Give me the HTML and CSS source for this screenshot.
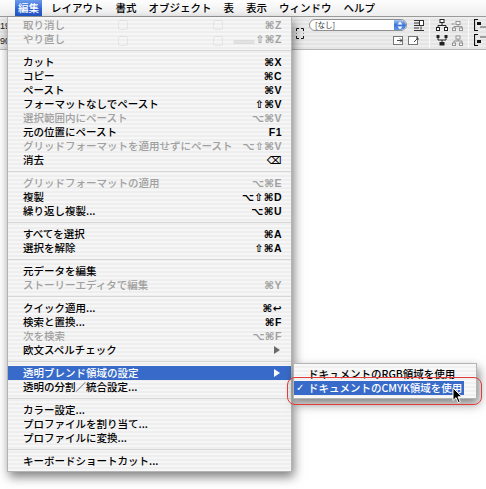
FILE: index.html
```html
<!DOCTYPE html>
<html lang="ja">
<head>
<meta charset="utf-8">
<title>編集メニュー</title>
<link rel="stylesheet" href="styles.css">
</head>
<body>
<div class="menubar">
  <span class="mb-item active">編集</span>
  <span class="mb-item">レイアウト</span>
  <span class="mb-item">書式</span>
  <span class="mb-item">オブジェクト</span>
  <span class="mb-item">表</span>
  <span class="mb-item">表示</span>
  <span class="mb-item">ウィンドウ</span>
  <span class="mb-item">ヘルプ</span>
</div>

<div class="toolbar">
  <div class="tb-stub"><span>19</span><span>90</span></div>
  <div class="tb-right">
    <div class="tb-frame">
      <svg width="8" height="11" viewBox="0 0 8 11"><path d="M0.5 3V0.5H3M5 0.5H7.5V3M7.5 8V10.5H5M3 10.5H0.5V8" fill="none" stroke="#111" stroke-width="1"/><path d="M0.5 5v1M7.5 5v1" stroke="#888" stroke-width="1"/></svg>
    </div>
    <div class="tb-main">
      <div class="tb-row">
        <div class="dropdown"><span class="dd-text">[なし]</span><span class="dd-btn"><svg width="6" height="9" viewBox="0 0 6 9"><path d="M3 0.5L5.5 3.5H0.5Z M3 8.5L5.5 5.5H0.5Z" fill="#fff"/></svg></span></div>
        <span class="icon"><svg width="12" height="12" viewBox="0 0 12 12"><path d="M1 1.5h5M1 4h5M1 6.5h5M1 9h5M1 11.5h10" stroke="#333" stroke-width="1"/><rect x="6.5" y="1.5" width="4" height="5" fill="#fff" stroke="#333"/><path d="M8 7.5v3" stroke="#333"/></svg></span>
      </div>
      <div class="tb-row row2">
        <span class="icon"><svg width="12" height="12" viewBox="0 0 12 12"><rect x="0.5" y="2.5" width="9" height="8" fill="#fff" stroke="#777"/><path d="M4 6.5h5M7 4.5l2 2-2 2" fill="none" stroke="#444"/></svg></span>
        <span class="icon"><svg width="12" height="12" viewBox="0 0 12 12"><rect x="0.5" y="2.5" width="9" height="8" fill="#fff" stroke="#777"/><path d="M6 8l4-4M8 4h2v2" fill="none" stroke="#444"/></svg></span>
      </div>
    </div>
    <div class="tb-sep"></div>
    <div class="tb-group">
      <div class="tb-row">
        <span class="icon"><svg width="12" height="12" viewBox="0 0 12 12"><rect x="4" y="0.5" width="4" height="3" fill="#fff" stroke="#222"/><path d="M6 3.5v3M2 6.5h8M2 6.5v2M10 6.5v2" fill="none" stroke="#222"/><rect x="0.5" y="8.5" width="3" height="3" fill="#fff" stroke="#222"/><rect x="8.5" y="8.5" width="3" height="3" fill="#fff" stroke="#222"/></svg></span>
        <span class="icon faded"><svg width="12" height="12" viewBox="0 0 12 12"><rect x="5" y="2.5" width="4" height="3" fill="#fff" stroke="#777"/><path d="M7 5.5v2M3 7.5h8M3 7.5v1.5M11 7.5v1.5M0.5 5h3" fill="none" stroke="#777"/><rect x="1.5" y="9" width="3" height="2.5" fill="#fff" stroke="#777"/><rect x="8.5" y="9" width="3" height="2.5" fill="#fff" stroke="#777"/></svg></span>
      </div>
      <div class="tb-row">
        <span class="icon"><svg width="12" height="12" viewBox="0 0 12 12"><rect x="0.5" y="1" width="3" height="3" fill="#222"/><rect x="8.5" y="1" width="3" height="3" fill="#222"/><path d="M2 4v2h8V4M6 6v2" fill="none" stroke="#222"/><rect x="3.5" y="8" width="5" height="3.5" fill="#222"/></svg></span>
        <span class="icon faded"><svg width="12" height="12" viewBox="0 0 12 12"><rect x="5" y="2" width="4" height="3" fill="#fff" stroke="#777"/><path d="M7 5v2M3 7h8M3 7v2M11 7v2" fill="none" stroke="#777"/><rect x="1.5" y="9" width="3" height="2.5" fill="#fff" stroke="#777"/><rect x="8.5" y="9" width="3" height="2.5" fill="#fff" stroke="#777"/></svg></span>
      </div>
    </div>
    <div class="tb-sep"></div>
    <div class="tb-group">
      <div class="tb-row">
        <span class="icon"><svg width="12" height="12" viewBox="0 0 12 12"><path d="M4 0.5H0.5V11.5H4" fill="none" stroke="#111" stroke-width="1.2"/><rect x="3" y="3" width="4" height="3" fill="#111"/><path d="M6 8h6" stroke="#555"/></svg></span>
      </div>
      <div class="tb-row">
        <span class="icon"><svg width="12" height="12" viewBox="0 0 12 12"><path d="M4 0.5H0.5V11.5H4" fill="none" stroke="#111" stroke-width="1.2"/><rect x="3" y="6" width="4" height="3" fill="#111"/><path d="M6 3h6" stroke="#555"/></svg></span>
      </div>
    </div>
  </div>
</div>

<div class="document"></div>

<div class="menu">
  <div class="ghost">
    <span class="g g1"></span><span class="g g2"></span><span class="g g3"></span><span class="g g4"></span><span class="g g5"></span>
  </div>
  <div class="mi disabled"><span>取り消し</span><span class="sc">⌘Z</span></div>
  <div class="mi disabled"><span>やり直し</span><span class="sc">⇧⌘Z</span></div>
  <div class="sep"></div>
  <div class="mi"><span>カット</span><span class="sc">⌘X</span></div>
  <div class="mi"><span>コピー</span><span class="sc">⌘C</span></div>
  <div class="mi"><span>ペースト</span><span class="sc">⌘V</span></div>
  <div class="mi"><span>フォーマットなしでペースト</span><span class="sc">⇧⌘V</span></div>
  <div class="mi disabled"><span>選択範囲内にペースト</span><span class="sc">⌥⌘V</span></div>
  <div class="mi"><span>元の位置にペースト</span><span class="sc">F1</span></div>
  <div class="mi disabled"><span>グリッドフォーマットを適用せずにペースト</span><span class="sc">⌥⇧⌘V</span></div>
  <div class="mi"><span>消去</span><span class="sc">⌫</span></div>
  <div class="sep"></div>
  <div class="mi disabled"><span>グリッドフォーマットの適用</span><span class="sc">⌥⌘E</span></div>
  <div class="mi"><span>複製</span><span class="sc">⌥⇧⌘D</span></div>
  <div class="mi"><span>繰り返し複製...</span><span class="sc">⌥⌘U</span></div>
  <div class="sep"></div>
  <div class="mi"><span>すべてを選択</span><span class="sc">⌘A</span></div>
  <div class="mi"><span>選択を解除</span><span class="sc">⇧⌘A</span></div>
  <div class="sep"></div>
  <div class="mi"><span>元データを編集</span></div>
  <div class="mi disabled"><span>ストーリーエディタで編集</span><span class="sc">⌘Y</span></div>
  <div class="sep"></div>
  <div class="mi"><span>クイック適用...</span><span class="sc">⌘↩</span></div>
  <div class="mi"><span>検索と置換...</span><span class="sc">⌘F</span></div>
  <div class="mi disabled"><span>次を検索</span><span class="sc">⌥⌘F</span></div>
  <div class="mi"><span>欧文スペルチェック</span><span class="arrow gray"></span></div>
  <div class="sep"></div>
  <div class="mi selected"><span>透明ブレンド領域の設定</span><span class="arrow"></span></div>
  <div class="mi"><span>透明の分割／統合設定...</span></div>
  <div class="sep"></div>
  <div class="mi"><span>カラー設定...</span></div>
  <div class="mi"><span>プロファイルを割り当て...</span></div>
  <div class="mi"><span>プロファイルに変換...</span></div>
  <div class="sep"></div>
  <div class="mi"><span>キーボードショートカット...</span></div>
</div>

<div class="submenu">
  <div class="si"><span>ドキュメントのRGB領域を使用</span></div>
  <div class="si selected"><span class="check">✓</span><span>ドキュメントのCMYK領域を使用</span></div>
</div>

<div class="annotation"></div>

<svg class="cursor" width="12" height="17" viewBox="0 0 12 17"><path d="M1 1V13.5L4 10.6L6.2 15.6L8.2 14.7L6 9.8H10Z" fill="#000" stroke="#fff" stroke-width="1" stroke-linejoin="round"/></svg>
</body>
</html>
```

FILE: styles.css
```css
* { box-sizing: border-box; }

html, body {
  margin: 0;
  padding: 0;
}

body {
  width: 486px;
  height: 489px;
  overflow: hidden;
  position: relative;
  background: #ffffff;
  font-family: "Noto Sans CJK JP", "DejaVu Sans", sans-serif;
  color: #000;
}

/* ---------- menu bar ---------- */
.menubar {
  height: 17px;
  display: flex;
  gap: 6px;
  padding-left: 15px;
  background: linear-gradient(#fdfdfd, #eeeeee);
  border-bottom: 1px solid #9a9a9a;
  font-size: 10.5px;
  font-weight: 500;
  line-height: 16px;
  white-space: nowrap;
}

.mb-item {
  padding: 0 3px;
  height: 16px;
}

.mb-item.active {
  color: #fff;
  background: linear-gradient(#6b9bec, #2c62d3 60%, #2458c8);
}

/* ---------- control palette ---------- */
.toolbar {
  height: 33px;
  display: flex;
  justify-content: space-between;
  background: repeating-linear-gradient(#ededed 0, #ededed 2px, #e4e4e4 2px, #e4e4e4 4px);
  border-bottom: 1px solid #b8b8b8;
}

.tb-stub {
  display: flex;
  flex-direction: column;
  gap: 4px;
  padding: 4px 0 0 0;
  font-family: "Liberation Sans", sans-serif;
  font-size: 9px;
  line-height: 11px;
  color: #222;
}

.tb-right {
  width: 194px;
  display: flex;
  padding-top: 2px;
}

.tb-frame {
  width: 16px;
  padding: 1px 0 0 4px;
}

.tb-main {
  width: 118px;
  display: flex;
  flex-direction: column;
  gap: 3px;
}

.tb-row {
  display: flex;
  gap: 3px;
  height: 12px;
}

.tb-main .tb-row:first-child {
  gap: 6px;
  padding-left: 1px;
}

.tb-row.row2 {
  padding-left: 85px;
}

.icon {
  width: 12px;
  height: 12px;
  display: block;
}

.icon svg { display: block; }

.icon.faded { opacity: 0.75; }

.tb-group {
  display: flex;
  flex-direction: column;
  gap: 3px;
}

.tb-sep {
  width: 1px;
  height: 29px;
  margin: 0 6px 0 4px;
  background: #c4c4c4;
  border-right: 1px solid #fafafa;
}

.tb-group + .tb-sep {
  margin: 0 5px 0 5px;
}

.dropdown {
  width: 98px;
  height: 12px;
  display: flex;
  justify-content: space-between;
  background: #fff;
  border: 1px solid #8f8f8f;
  border-radius: 6px;
  overflow: hidden;
}

.dd-text {
  font-size: 7.5px;
  line-height: 10px;
  padding-left: 5px;
  color: #333;
}

.dd-btn {
  width: 12px;
  height: 10px;
  display: flex;
  align-items: center;
  justify-content: center;
  background: linear-gradient(#a6c8f4, #3b73d8 50%, #5f97ea);
  border-radius: 0 5px 5px 0;
}

.document {
  height: 439px;
  background: #fff;
}

/* ---------- main menu ---------- */
.menu {
  position: absolute;
  left: 7px;
  top: 17px;
  width: 285px;
  padding: 1px 0 3px 0;
  background: repeating-linear-gradient(#f6f6f6 0, #f6f6f6 2px, #eeeeee 2px, #eeeeee 4px);
  border: 1px solid #b4b4b4;
  border-top: none;
  box-shadow: 2px 5px 10px rgba(0, 0, 0, 0.5);
  font-size: 10.5px;
  font-weight: 500;
  line-height: 14px;
  white-space: nowrap;
}

/* faint show-through of the palette behind the translucent menu */
.ghost {
  position: absolute;
  left: 0;
  top: 0;
  width: 100%;
  height: 32px;
  pointer-events: none;
}

.g {
  position: absolute;
  display: block;
  border: 1px solid rgba(0, 0, 0, 0.06);
  border-radius: 2px;
}

.g1 { left: 110px; top: 3px; width: 10px; height: 10px; }
.g2 { left: 110px; top: 19px; width: 10px; height: 10px; }
.g3 { left: 205px; top: 3px; width: 10px; height: 10px; }
.g4 { left: 205px; top: 19px; width: 10px; height: 10px; }
.g5 { left: 225px; top: 23px; width: 22px; height: 4px; border: none; background: rgba(0, 0, 0, 0.08); }

.mi {
  height: 14px;
  display: flex;
  justify-content: space-between;
  align-items: center;
  padding: 0 9px 0 15px;
  color: #000;
  position: relative;
}

.mi.disabled { color: #a0a0a0; }

.mi.selected {
  color: #fff;
  background: #386bc9;
}

.sc {
  font-family: "Liberation Sans", "DejaVu Sans", sans-serif;
  font-weight: bold;
  font-size: 10.5px;
  letter-spacing: 0.5px;
}

.arrow {
  width: 0;
  height: 0;
  border-left: 6px solid #fff;
  border-top: 4px solid transparent;
  border-bottom: 4px solid transparent;
  margin-right: 2px;
}

.arrow.gray { border-left-color: #6a6a6a; }

.sep {
  height: 9px;
  display: flex;
  align-items: center;
}

.sep::before {
  content: "";
  display: block;
  width: 100%;
  height: 1px;
  background: #d6d6d6;
}

/* ---------- submenu ---------- */
.submenu {
  position: absolute;
  left: 293px;
  top: 363px;
  width: 184px;
  padding: 3px 0 3px 0;
  background: repeating-linear-gradient(#f8f8f8 0, #f8f8f8 2px, #f0f0f0 2px, #f0f0f0 4px);
  border: 1px solid #b4b4b4;
  box-shadow: 2px 5px 10px rgba(0, 0, 0, 0.5);
  font-size: 10.5px;
  font-weight: 500;
  line-height: 14px;
  white-space: nowrap;
}

.si {
  height: 14px;
  display: flex;
  align-items: center;
  padding-left: 14px;
}

.si.selected {
  color: #fff;
  background: #386bc9;
  padding-left: 2px;
  margin-right: 12px;
}

.check {
  width: 12px;
  font-family: "DejaVu Sans", sans-serif;
  font-weight: bold;
  font-size: 10px;
}

.annotation {
  position: absolute;
  left: 287px;
  top: 377px;
  width: 195px;
  height: 28px;
  border: 1.5px solid #e23b3b;
  border-radius: 8px;
}

.cursor {
  position: absolute;
  left: 452px;
  top: 387px;
}
```
